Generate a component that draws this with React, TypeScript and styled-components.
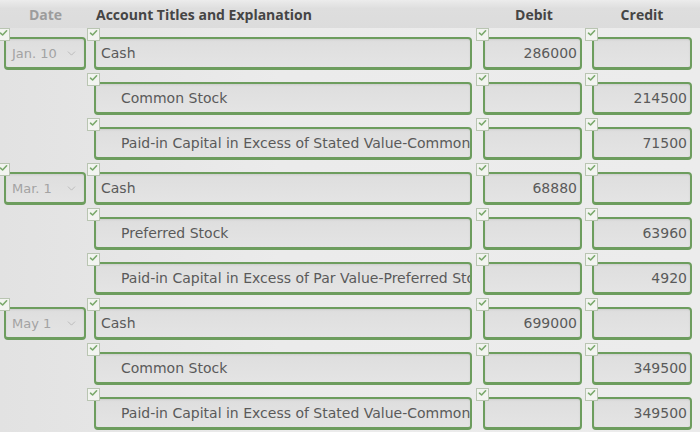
import React from "react";
import styled, { createGlobalStyle, css } from "styled-components";
import { ChevronDown } from "lucide-react";

const GlobalStyle = createGlobalStyle`
  html, body {
    margin: 0;
    padding: 0;
    background: #e8e8e8;
  }
`;

type Entry = {
  date?: string;
  account: string;
  debit?: string;
  credit?: string;
};

const entries: Entry[] = [
  { date: "Jan. 10", account: "Cash", debit: "286000" },
  { account: "Common Stock", credit: "214500" },
  { account: "Paid-in Capital in Excess of Stated Value-Common Stock", credit: "71500" },
  { date: "Mar. 1", account: "Cash", debit: "68880" },
  { account: "Preferred Stock", credit: "63960" },
  { account: "Paid-in Capital in Excess of Par Value-Preferred Stock", credit: "4920" },
  { date: "May 1", account: "Cash", debit: "699000" },
  { account: "Common Stock", credit: "349500" },
  { account: "Paid-in Capital in Excess of Stated Value-Common Stock", credit: "349500" },
];

const COLUMNS = "90px 389px 109px 1fr";

const Sheet = styled.div`
  width: 700px;
  height: 432px;
  overflow: hidden;
  background: linear-gradient(90deg, #e2e2e2 0%, #ebebeb 40%, #ececec 100%);
  font-family: "DejaVu Sans", Verdana, sans-serif;
`;

const HeaderBar = styled.div`
  display: grid;
  grid-template-columns: ${COLUMNS};
  margin-left: -3px;
  height: 28px;
  align-items: center;
  background: linear-gradient(180deg, #ececec 0%, #dedede 30%, #dcdcdc 100%);
  font-family: "Open Sans", "Liberation Sans", sans-serif;
  font-weight: 700;
  font-size: 14px;
  color: #444;
`;

const HeadCell = styled.div<{ $align?: "center" | "left"; $faded?: boolean }>`
  padding-left: 7px;
  text-align: ${({ $align }) => $align ?? "center"};
  color: ${({ $faded }) => ($faded ? "#9c9c9c" : "#454545")};
  white-space: nowrap;
  ${({ $align }) =>
    $align === "left" &&
    css`
      padding-left: 9px;
    `}
`;

const Rows = styled.div`
  display: flex;
  flex-direction: column;
  margin-left: -3px;
`;

const Row = styled.div`
  display: grid;
  grid-template-columns: ${COLUMNS};
  height: 45px;
`;

const Slot = styled.div`
  position: relative;
  padding: 9px 0 0 7px;
`;

const CheckMark = styled.div`
  position: absolute;
  top: 0;
  left: 0;
  z-index: 2;
  width: 13px;
  height: 13px;
  box-sizing: border-box;
  border: 1px solid #b9c5b2;
  background: #f2f4f0;
  display: flex;
  align-items: flex-start;
  justify-content: center;
`;

const Field = styled.div<{ $w: number; $numeric?: boolean; $indent?: boolean }>`
  box-sizing: border-box;
  width: ${({ $w }) => $w}px;
  height: 33px;
  border: 2px solid #6d9d5e;
  border-bottom-width: 3px;
  border-radius: 4px;
  background: linear-gradient(180deg, #dedede 0%, #e4e4e4 100%);
  box-shadow: inset 0 1px 2px rgba(0, 0, 0, 0.08);
  display: flex;
  align-items: center;
  overflow: hidden;
  white-space: nowrap;
  font-size: 14px;
  color: #5a5a5a;
  padding: ${({ $numeric, $indent }) =>
    $numeric ? "0 3px 0 0" : $indent ? "0 0 0 25px" : "0 0 0 5px"};
  justify-content: ${({ $numeric }) => ($numeric ? "flex-end" : "flex-start")};
`;

const DateField = styled(Field)`
  justify-content: space-between;
  padding: 0 6px 0 6px;
  font-size: 13px;
  color: #a3a3a3;
`;

const Tick = () => (
  <CheckMark>
    <svg width="11" height="8" viewBox="0 0 11 8">
      <path
        d="M2.5 4.2 L4.6 6 L8.6 1.8"
        fill="none"
        stroke="#79a86a"
        strokeWidth="1.6"
        strokeLinecap="round"
        strokeLinejoin="round"
      />
    </svg>
  </CheckMark>
);

const JournalRow = ({ entry }: { entry: Entry }) => {
  const isCredit = Boolean(entry.credit);
  return (
    <Row>
      <Slot>
        {entry.date && (
          <>
            <Tick />
            <DateField $w={82}>
              <span>{entry.date}</span>
              <ChevronDown size={13} strokeWidth={1.4} color="#b0b0b0" />
            </DateField>
          </>
        )}
      </Slot>
      <Slot>
        <Tick />
        <Field $w={378} $indent={isCredit}>
          {entry.account}
        </Field>
      </Slot>
      <Slot>
        <Tick />
        <Field $w={99} $numeric>
          {entry.debit ?? ""}
        </Field>
      </Slot>
      <Slot>
        <Tick />
        <Field $w={100} $numeric>
          {entry.credit ?? ""}
        </Field>
      </Slot>
    </Row>
  );
};

export default function App() {
  return (
    <>
      <GlobalStyle />
      <Sheet>
        <HeaderBar>
          <HeadCell $faded>Date</HeadCell>
          <HeadCell $align="left">Account Titles and Explanation</HeadCell>
          <HeadCell>Debit</HeadCell>
          <HeadCell style={{ paddingRight: 8 }}>Credit</HeadCell>
        </HeaderBar>
        <Rows>
          {entries.map((entry, i) => (
            <JournalRow key={i} entry={entry} />
          ))}
        </Rows>
      </Sheet>
    </>
  );
}
